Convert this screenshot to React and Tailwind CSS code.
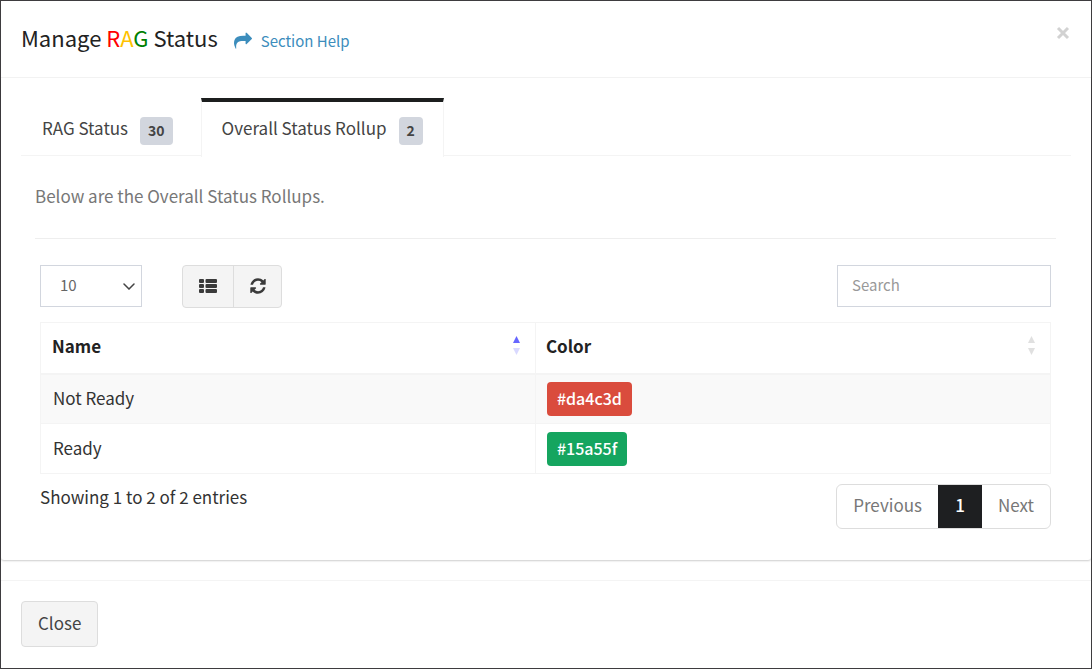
import { useState } from "react";
import clsx from "clsx";

const tabs = [
  { id: "rag", label: "RAG Status", count: 30 },
  { id: "rollup", label: "Overall Status Rollup", count: 2 },
];

const rollups = [
  { name: "Not Ready", color: "#da4c3d" },
  { name: "Ready", color: "#15a55f" },
];

function ShareIcon({ className }) {
  return (
    <svg viewBox="0 0 1792 1792" fill="currentColor" className={className} aria-hidden="true">
      <path d="M1792 640q0 26-19 45l-512 512q-19 19-45 19t-45-19-19-45v-256h-224q-98 0-175.500 6t-154 21.500-133 42.500-105.500 69.500-80 101-48.500 138.500-17.500 181q0 55 5 123 0 6 2.500 23.500t2.500 26.500q0 15-8.500 25t-23.500 10q-16 0-28-17-7-9-13-22t-13.500-30-10.500-24q-127-285-127-451 0-199 53-333 162-403 875-403h224v-256q0-26 19-45t45-19 45 19l512 512q19 19 19 45z" />
    </svg>
  );
}

function RefreshIcon({ className }) {
  return (
    <svg viewBox="0 0 1792 1792" fill="currentColor" className={className} aria-hidden="true">
      <path d="M1639 1056q0 5-1 7-64 268-268 434.500t-478 166.500q-146 0-282.500-55t-243.500-157l-129 129q-19 19-45 19t-45-19-19-45v-448q0-26 19-45t45-19h448q26 0 45 19t19 45-19 45l-137 137q71 66 161 102t187 36q134 0 250-65t186-179q11-17 53-117 8-23 30-23h192q13 0 22.500 9.500t9.500 22.500zm25-800v448q0 26-19 45t-45 19h-448q-26 0-45-19t-19-45 19-45l138-138q-148-137-349-137-134 0-250 65t-186 179q-11 17-53 117-8 23-30 23h-199q-13 0-22.500-9.500t-9.500-22.500v-7q65-268 270-434.500t480-166.500q146 0 284 55.500t245 156.500l130-129q19-19 45-19t45 19 19 45z" />
    </svg>
  );
}

function ListIcon({ className }) {
  return (
    <svg viewBox="0 0 18 14" fill="currentColor" className={className} aria-hidden="true">
      {[0, 5, 10].map((y) => (
        <g key={y}>
          <rect x="0" y={y} width="5" height="4" rx="1" />
          <rect x="6.500" y={y} width="11.500" height="4" rx="1" />
        </g>
      ))}
    </svg>
  );
}

function SortIcon({ active }) {
  return (
    <svg viewBox="0 0 7 19" className={clsx("h-[19px] w-[7px]", active ? "text-[#6666ff]" : "text-[#e0e0e0]")} fill="currentColor" aria-hidden="true">
      <path d="M3.500 0L7 7H0z" />
      <path d="M3.500 19L0 12h7z" opacity={active ? 0.25 : 1} />
    </svg>
  );
}

function Header() {
  return (
    <div className="flex items-start justify-between border-b border-[#f4f4f4] px-5 pt-[18px] pb-5">
      <div className="flex items-start gap-4">
        <h4 className="text-[22px] leading-9 text-[#222]">
          Manage <span className="text-[#ff0000]">R</span>
          <span className="text-[#ffc200]">A</span>
          <span className="text-[#008000]">G</span> Status
        </h4>
        <a href="#help" className="flex items-center gap-[9px] pt-[6px] text-[15px] leading-8 text-[#3c8dbc]">
          <ShareIcon className="h-[18px] w-[18px]" />
          Section Help
        </a>
      </div>
      <button type="button" aria-label="Close" className="mt-[3px] -mr-[3px] p-1">
        <svg viewBox="0 0 14 14" className="h-[14px] w-[14px] text-[#d2d2d2]" fill="none" stroke="currentColor" strokeWidth="3" aria-hidden="true">
          <path d="M2 2l10 10M12 2L2 12" />
        </svg>
      </button>
    </div>
  );
}

function Tabs({ current, onChange }) {
  return (
    <div role="tablist" className="flex items-start gap-[7px] border-b border-[#f4f4f4]">
      {tabs.map((tab) => (
        <button
          key={tab.id}
          type="button"
          role="tab"
          aria-selected={tab.id === current}
          onClick={() => onChange(tab.id)}
          className={clsx(
            "-mb-0.5 flex h-[59px] items-center gap-3 border-t-4 px-5 pb-[3px] text-[17px] leading-6 text-[#444]",
            tab.id === current ? "border-x border-t-[#1c1e1e] border-x-[#f4f4f4] bg-white" : "border-x border-transparent"
          )}
        >
          <span>{tab.label}</span>
          <span className="mt-[5px] rounded bg-[#d2d6de] px-2 pb-px text-sm leading-[27px] font-bold text-[#444]">{tab.count}</span>
        </button>
      ))}
    </div>
  );
}

function Toolbar() {
  return (
    <div className="flex items-start justify-between">
      <div className="flex items-start gap-10">
        <div className="relative">
          <select aria-label="Entries per page" className="h-[42px] w-[102px] appearance-none border border-[#d2d6de] bg-white pb-0.5 pl-[19px] text-[15px] text-[#666]">
            <option>10</option>
            <option>25</option>
            <option>50</option>
          </select>
          <svg viewBox="0 0 12 7" className="pointer-events-none absolute top-[18px] right-[7px] h-[7px] w-3 text-[#444]" fill="none" stroke="currentColor" strokeWidth="1.500" aria-hidden="true">
            <path d="M1 1l5 5 5-5" strokeLinecap="round" />
          </svg>
        </div>
        <div className="flex h-[43px] divide-x divide-[#ddd] rounded border border-[#ddd] bg-[#f4f4f4] text-[#3a3a3a]">
          <button type="button" aria-label="Columns" className="flex w-[51px] items-center justify-center pb-0.5">
            <ListIcon className="h-[14px] w-[18px]" />
          </button>
          <button type="button" aria-label="Refresh" className="flex w-[47px] items-center justify-center pb-0.5">
            <RefreshIcon className="h-[18px] w-[18px]" />
          </button>
        </div>
      </div>
      <input
        type="search"
        aria-label="Search"
        placeholder="Search"
        className="h-[42px] w-[214px] border border-[#d2d6de] bg-white px-[14px] pb-[3px] text-[15px] text-[#555] placeholder:text-[#999]"
      />
    </div>
  );
}

function RollupTable() {
  return (
    <table className="mt-[14px] w-full table-fixed border-collapse border border-[#f4f4f4] text-[17px] leading-6 text-[#333]">
      <thead>
        <tr className="h-[51px] border-b-2 border-[#f4f4f4] text-left text-[#222]">
          <th className="w-[49%] border-r border-[#f4f4f4] pr-[15px] pb-1 pl-[11px] font-bold">
            <div className="flex items-center justify-between">
              Name
              <SortIcon active />
            </div>
          </th>
          <th className="pr-[15px] pb-1 pl-[10px] font-bold">
            <div className="flex items-center justify-between">
              Color
              <SortIcon />
            </div>
          </th>
        </tr>
      </thead>
      <tbody>
        {rollups.map((row) => (
          <tr key={row.name} className="h-[50px] border-b border-[#f4f4f4] odd:bg-[#f9f9f9]">
            <td className="border-r border-[#f4f4f4] px-3 pb-0.5">{row.name}</td>
            <td className="px-[11px] pt-px">
              <span
                className="block w-fit rounded px-[10px] pb-0.5 text-base leading-8 font-medium text-white"
                style={{ backgroundColor: row.color }}
              >
                {row.color}
              </span>
            </td>
          </tr>
        ))}
      </tbody>
    </table>
  );
}

function Pagination() {
  return (
    <nav aria-label="Pages" className="flex h-[45px] overflow-hidden rounded-md border border-[#ddd] text-[17px] text-[#777]">
      <button type="button" className="px-4 pb-[3px]">Previous</button>
      <button type="button" aria-current="page" className="-my-px w-11 bg-[#1e1f21] pb-[3px] font-medium text-white">1</button>
      <button type="button" className="px-4 pb-[3px]">Next</button>
    </nav>
  );
}

export default function App() {
  const [tab, setTab] = useState("rollup");

  return (
    <div className="flex min-h-screen flex-col border border-[#3e3c3f] bg-white font-['Noto_Sans_CJK_SC','Source_Sans_Pro',sans-serif]">
      <Header />
      <div className="rounded-b-[3px] px-5 pt-5 pb-[31px] shadow-[0_1px_2px_rgba(0,0,0,0.2)]">
        <Tabs current={tab} onChange={setTab} />
        <div className="pt-7 pr-[15px] pl-[14px]">
          <p className="text-[17px] leading-6 text-[#777]">Below are the Overall Status Rollups.</p>
          <hr className="mt-[30px] mb-[26px] border-[#eee]" />
          <div className="px-[5px]">
            <Toolbar />
            <RollupTable />
            <div className="mt-[10px] flex items-start justify-between">
              <p className="text-[17px] leading-[26px] text-[#333]">Showing 1 to 2 of 2 entries</p>
              <Pagination />
            </div>
          </div>
        </div>
      </div>
      <div className="mt-5 border-t border-[#f4f4f4] px-5 pt-5 pb-5">
        <button type="button" className="h-[46px] rounded border border-[#ddd] bg-[#f4f4f4] px-4 pb-0.5 text-[17px] text-[#444]">
          Close
        </button>
      </div>
    </div>
  );
}
